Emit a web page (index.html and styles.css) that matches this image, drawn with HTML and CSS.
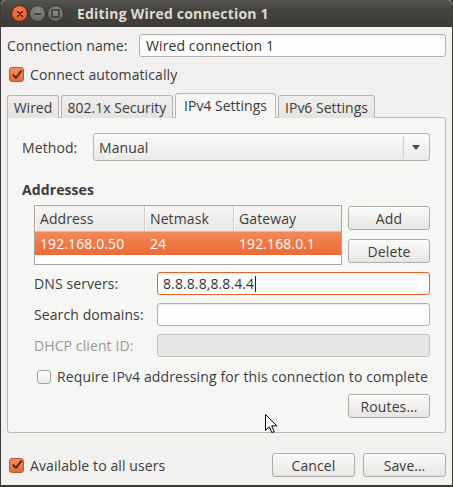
FILE: index.html
```html
<!DOCTYPE html>
<html>
<head>
<meta charset="utf-8">
<link rel="stylesheet" href="styles.css">
</head>
<body>
<div class="window">
  <div class="titlebar">
    <div class="wbtns">
      <span class="wbtn close"><svg width="8" height="8" viewBox="0 0 8 8"><path d="M1.5 1.5L6.5 6.5M6.5 1.5L1.5 6.5" stroke="#3a1a10" stroke-width="1.4" stroke-linecap="round"/></svg></span>
      <span class="wbtn"><svg width="8" height="8" viewBox="0 0 8 8"><path d="M0.5 4H7.5" stroke="#2f2e2b" stroke-width="1.4"/></svg></span>
      <span class="wbtn"><svg width="9" height="9" viewBox="0 0 9 9"><rect x="1" y="1" width="7" height="7" fill="none" stroke="#2f2e2b" stroke-width="1.3"/></svg></span>
    </div>
    <div class="title">Editing Wired connection 1</div>
  </div>
  <div class="content">
    <div class="name-row">
      <span class="label name-label">Connection name:</span>
      <div class="entry name-entry">Wired connection 1</div>
    </div>
    <div class="check-row auto-row">
      <span class="check checked"><svg width="13" height="12" viewBox="0 0 13 12"><path d="M2.5 6.2L5.3 9.2L11 1.8" fill="none" stroke="#4a2414" stroke-width="2" stroke-linecap="round" stroke-linejoin="round"/></svg></span>
      <span class="label">Connect automatically</span>
    </div>
    <div class="notebook">
      <div class="tabs">
        <div class="tab tab-wired">Wired</div>
        <div class="tab tab-sec">802.1x Security</div>
        <div class="tab active tab-v4">IPv4 Settings</div>
        <div class="tab tab-v6">IPv6 Settings</div>
      </div>
      <div class="panel">
        <div class="method-row">
          <span class="label method-label">Method:</span>
          <div class="combo">
            <span class="combo-text">Manual</span>
            <span class="combo-sep"></span>
            <span class="combo-arrow"></span>
          </div>
        </div>
        <div class="heading">Addresses</div>
        <div class="addr-group">
          <div class="table">
            <div class="thead">
              <div class="th c1">Address</div>
              <div class="th c2">Netmask</div>
              <div class="th c3">Gateway</div>
            </div>
            <div class="trow">
              <div class="td c1">192.168.0.50</div>
              <div class="td c2">24</div>
              <div class="td c3">192.168.0.1</div>
            </div>
          </div>
          <div class="side-btns">
            <div class="button side-btn">Add</div>
            <div class="button side-btn">Delete</div>
          </div>
        </div>
        <div class="form">
          <div class="form-row">
            <span class="label form-label">DNS servers:</span>
            <div class="entry form-entry focus">8.8.8.8,8.8.4.4<span class="caret"></span></div>
          </div>
          <div class="form-row">
            <span class="label form-label">Search domains:</span>
            <div class="entry form-entry"></div>
          </div>
          <div class="form-row">
            <span class="label form-label disabled">DHCP client ID:</span>
            <div class="entry form-entry disabled-entry"></div>
          </div>
        </div>
        <div class="check-row require-row">
          <span class="check"></span>
          <span class="label">Require IPv4 addressing for this connection to complete</span>
        </div>
        <div class="routes-row">
          <div class="button side-btn">Routes…</div>
        </div>
      </div>
    </div>
    <div class="bottom-row">
      <div class="check-row">
        <span class="check checked"><svg width="13" height="12" viewBox="0 0 13 12"><path d="M2.5 6.2L5.3 9.2L11 1.8" fill="none" stroke="#4a2414" stroke-width="2" stroke-linecap="round" stroke-linejoin="round"/></svg></span>
        <span class="label">Available to all users</span>
      </div>
      <div class="dlg-btns">
        <div class="button dlg-btn">Cancel</div>
        <div class="button dlg-btn">Save…</div>
      </div>
    </div>
  </div>
  <svg class="cursor" width="13" height="20" viewBox="0 0 13 20"><path d="M0.5 0.5V16.5L4.3 12.8L6.8 18.6L9.2 17.6L6.7 11.9H11.8Z" fill="#ffffff" stroke="#000000" stroke-width="1" stroke-linejoin="round"/></svg>
</div>
</body>
</html>
```

FILE: styles.css
```css
* { box-sizing: border-box; }
html, body { margin: 0; padding: 0; background: #3c3b37; }
body { width: 453px; height: 487px; overflow: hidden; font-family: "Open Sans", "Noto Sans", sans-serif; font-size: 14px; letter-spacing: 0.1px; color: #3c3c3c; }
.window { position: relative; width: 453px; height: 487px; background: #f2f1f0; border: 1px solid #3c3b37; border-top: none; border-bottom-width: 2px; border-radius: 5px 5px 0 0; overflow: hidden; }
.titlebar { height: 27px; background: linear-gradient(#55534d, #45433e 40%, #3c3b37); display: flex; align-items: center; border-radius: 5px 5px 0 0; }
.wbtns { display: flex; gap: 1px; margin-left: 10px; }
.wbtn { width: 17px; height: 17px; border-radius: 50%; background: radial-gradient(circle at 50% 35%, #8b8984, #5f5d58); border: 1px solid #34332f; display: flex; align-items: center; justify-content: center; }
.wbtn.close { background: radial-gradient(circle at 50% 35%, #f4835a, #df4a1b); border-color: #3a2b24; }
.title { margin-left: 13px; font-weight: bold; color: #dfdbd2; font-size: 14px; letter-spacing: 0.2px; }
.content { padding: 7px 6px 0 6px; }
.label { white-space: nowrap; }
.name-row { display: flex; align-items: center; height: 23px; justify-content: space-between; }
.entry { height: 23px; background: linear-gradient(#fcfcfc, #ffffff); border: 1px solid #b3b0ab; border-radius: 3px; display: flex; align-items: center; padding-left: 5px; white-space: nowrap; color: #333; box-shadow: inset 0 1px 1px rgba(0,0,0,0.06); }
.name-entry { width: 307px; padding-left: 6px; }
.check-row { display: flex; align-items: center; gap: 6px; }
.auto-row { margin-top: 10px; height: 15px; padding-left: 2px; }
.check { width: 15px; height: 15px; border: 1px solid #a8a5a0; border-radius: 3px; background: linear-gradient(#fdfdfd, #ecebea); display: flex; align-items: center; justify-content: center; flex: none; }
.check.checked { background: linear-gradient(#f48b5e, #e86b38); border-color: #b65a33; }
.check svg { margin-left: 1px; }
.notebook { margin-top: 11px; }
.tabs { display: flex; align-items: flex-end; gap: 2px; height: 25px; margin-bottom: -1px; position: relative; z-index: 1; }
.tab { height: 23px; border: 1px solid #b8b5b0; border-bottom: none; border-radius: 3px 3px 0 0; background: linear-gradient(#f0efee, #e4e3e1); display: flex; align-items: center; justify-content: center; white-space: nowrap; letter-spacing: 0; }
.tab.active { height: 25px; background: #f6f6f5; padding-bottom: 2px; }
.tab-wired { width: 52px; }
.tab-sec { width: 112px; }
.tab-v4 { width: 101px; }
.tab-v6 { width: 97px; }
.panel { height: 316px; border: 1px solid #bcb9b4; border-radius: 0 3px 3px 3px; background: #f6f6f5; padding: 15px 15px 0 14px; }
.method-row { display: flex; align-items: center; height: 28px; }
.method-label { width: 71px; }
.combo { flex: 1; height: 28px; border: 1px solid #b6b3ae; border-radius: 3px; background: linear-gradient(#fbfbfa, #ebeae8); display: flex; align-items: center; padding-left: 5px; }
.combo-text { flex: 1; }
.combo-sep { width: 1px; height: 22px; background: #d0cdc9; }
.combo-arrow { width: 0; height: 0; border-left: 4px solid transparent; border-right: 4px solid transparent; border-top: 5px solid #4c4c4c; margin: 0 9px 0 8px; }
.heading { font-weight: bold; margin-top: 20px; height: 17px; line-height: 17px; }
.addr-group { display: flex; gap: 6px; margin-top: 7px; padding-left: 12px; }
.table { width: 308px; height: 60px; border: 1px solid #a9a6a1; background: #ffffff; }
.thead { display: flex; height: 26px; background: linear-gradient(#f7f6f5, #e9e8e6); border-bottom: 1px solid #c7c4bf; }
.th { display: flex; align-items: center; padding-left: 5px; border-right: 1px solid #cfccc7; box-shadow: inset 1px 0 #ffffff; }
.th.c3 { border-right: none; }
.c1 { width: 110px; }
.c2 { width: 89px; }
.c3 { flex: 1; }
.trow { display: flex; height: 23px; background: linear-gradient(#f28a5c, #ef7845 50%, #ec6c37); color: #ffffff; }
.td { display: flex; align-items: center; padding-left: 5px; }
.side-btns { display: flex; flex-direction: column; gap: 9px; padding-top: 1px; }
.button { height: 24px; border: 1px solid #aeaba6; border-radius: 3px; background: linear-gradient(#fbfbfa, #e6e5e3); display: flex; align-items: center; justify-content: center; box-shadow: inset 0 1px #ffffff; white-space: nowrap; }
.side-btn { width: 82px; }
.form { display: flex; flex-direction: column; gap: 8px; margin-top: 7px; padding-left: 12px; }
.form-row { display: flex; align-items: center; height: 23px; }
.form-label { width: 123px; }
.form-entry { flex: 1; }
.form-entry.focus { border-color: #e0662f; }
.caret { display: inline-block; width: 1px; height: 16px; background: #222; margin-left: 1px; }
.disabled { color: #9b9994; }
.disabled-entry { background: #e8e7e6; border-color: #c3c0bb; box-shadow: none; }
.require-row { margin-top: 12px; height: 15px; padding-left: 15px; gap: 6px; letter-spacing: 0.12px; }
.require-row .check { width: 14px; height: 14px; }
.routes-row { display: flex; justify-content: flex-end; margin-top: 10px; }
.bottom-row { display: flex; align-items: center; justify-content: space-between; margin-top: 20px; height: 24px; padding-left: 2px; }
.dlg-btns { display: flex; gap: 8px; }
.dlg-btn { width: 83px; }
.cursor { position: absolute; left: 264px; top: 414px; }
```
